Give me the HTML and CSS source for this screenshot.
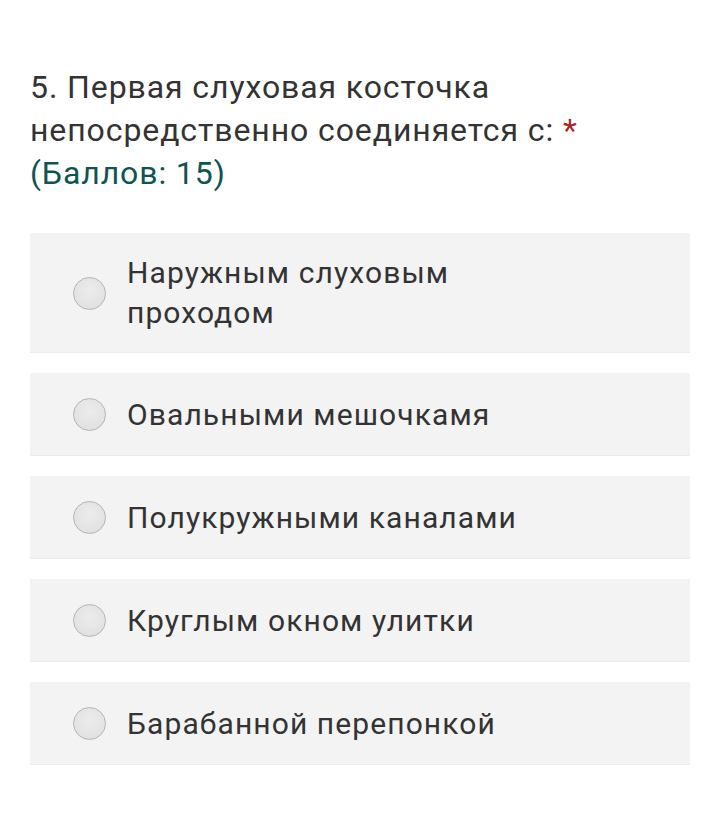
FILE: index.html
```html
<!DOCTYPE html>
<html lang="ru">
<head>
<meta charset="utf-8">
<link rel="stylesheet" href="styles.css">
</head>
<body>
<div class="question">
  <div class="title">5. Первая слуховая косточка непосредственно соединяется с: <span class="req">*</span><br><span class="points">(Баллов: 15)</span></div>
  <div class="options">
    <label class="option"><span class="radio"></span><span class="text">Наружным слуховым проходом</span></label>
    <label class="option"><span class="radio"></span><span class="text">Овальными мешочкамя</span></label>
    <label class="option"><span class="radio"></span><span class="text">Полукружными каналами</span></label>
    <label class="option"><span class="radio"></span><span class="text">Круглым окном улитки</span></label>
    <label class="option"><span class="radio"></span><span class="text">Барабанной перепонкой</span></label>
  </div>
</div>
</body>
</html>
```
FILE: styles.css
```css
html, body {
  margin: 0;
  padding: 0;
  background: #ffffff;
}
body {
  font-family: Roboto, "Noto Sans", sans-serif;
  color: #333333;
}
.question {
  padding: 66px 30px 0 30px;
}
.title {
  font-size: 32px;
  line-height: 43px;
  letter-spacing: 0.9px;
  color: #333333;
  padding-right: 90px;
}
.req {
  color: #a8281d;
}
.points {
  color: #0f5450;
}
.options {
  margin-top: 38px;
  display: flex;
  flex-direction: column;
  gap: 20px;
}
.option {
  display: flex;
  align-items: center;
  background: #f3f3f3;
  border-bottom: 1px solid #ececec;
  padding: 20px 20px 19px 43px;
  min-height: 43px;
}
.radio {
  flex: 0 0 auto;
  width: 31px;
  height: 31px;
  border-radius: 50%;
  border: 1px solid #b4b4b4;
  background: radial-gradient(circle at 50% 40%, #ececec 0%, #e2e2e2 70%, #d6d6d6 100%);
  margin-right: 21px;
}
.text {
  font-size: 30px;
  line-height: 40px;
  letter-spacing: 1.1px;
  color: #333333;
  padding-right: 150px;
}
```
